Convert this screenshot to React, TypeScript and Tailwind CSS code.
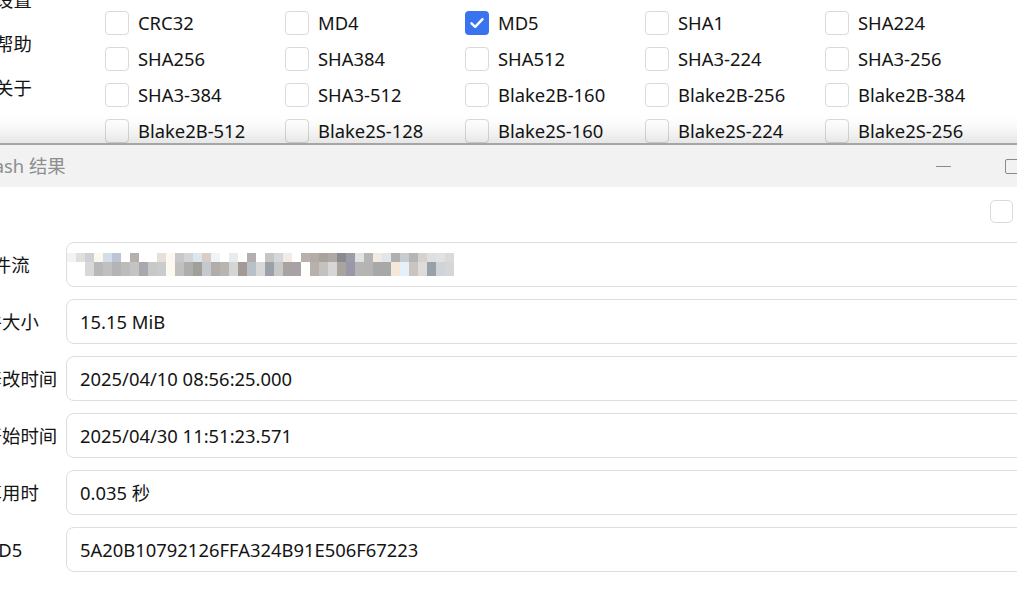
import React from "react";

const algos = [
  "CRC32", "MD4", "MD5", "SHA1", "SHA224",
  "SHA256", "SHA384", "SHA512", "SHA3-224", "SHA3-256",
  "SHA3-384", "SHA3-512", "Blake2B-160", "Blake2B-256", "Blake2B-384",
  "Blake2B-512", "Blake2S-128", "Blake2S-160", "Blake2S-224", "Blake2S-256",
];

const topRow = [
  "#f3f3f3", "#e2dedb", "#cfd0d3", "#fbf8f0", "#d2dfe9", "#bcc5d6", "#ffffff", "#b5b0ac", "#ffffff", "#ffffff",
  "#e8e0d8", "#fbf8f4", "#c8c8ca", "#d3d4d8", "#dde6ee", "#d8cec5", "#eef4f8", "#ffffff", "#e8ecee", "#ffffff",
  "#b5aeae", "#ffffff", "#c8c6c4", "#d5d8da", "#f2ece4", "#ffffff", "#b8b0ac", "#b2aba6", "#a8a39e", "#b0a8a4",
  "#8c8a8e", "#9a9ca8", "#e0e2e4", "#b5b5b5", "#f2ebe2", "#e2e6e8", "#b0b0b0", "#c6cccf", "#b5b5b5", "#d6d2cc",
  "#e0e0e0", "#e2e2e2", "#d8dadc",
];
const bottomRow = [
  "#ffffff", "#ffffff", "#d8d8d8", "#b8b8b8", "#c0c0c0", "#b4b4b4", "#bcbcbc", "#c4c4c4", "#a8a8b0", "#c8c8c8",
  "#c8cccc", "#fdf8f0", "#c0c0bc", "#b0aeac", "#a0a09b", "#c5c8cc", "#b0adaa", "#b8b4b0", "#d5d5d5", "#a09b95",
  "#b8c0c8", "#d8d8d8", "#9ca0a8", "#c8c8c8", "#a8a2a2", "#a8a2a4", "#ffffff", "#b8b0aa", "#c4c2bc", "#d6d6d6",
  "#aaa49e", "#9a98a8", "#b8b4b4", "#b4b4b4", "#a8a8a8", "#a8a8a8", "#f6e8d8", "#e6f0f8", "#c8c4c0", "#dcdcdc",
  "#98a0a8", "#d0d4d8", "#d4d6d8",
];

function Checkbox({ checked = false, size = 24 }: { checked?: boolean; size?: number }) {
  if (checked) {
    return (
      <div className="w-[24px] h-[24px] rounded-[4px] bg-[#3a73f0] flex items-center justify-center shrink-0">
        <svg width="16" height="16" viewBox="0 0 16 16" fill="none">
          <path d="M2.5 8.3 L6.2 11.8 L13.5 4.2" stroke="white" strokeWidth="2.4" strokeLinecap="round" strokeLinejoin="round" />
        </svg>
      </div>
    );
  }
  return (
    <div
      className={
        size === 24
          ? "w-[24px] h-[24px] rounded-[4px] border border-[#dadada] bg-white shrink-0"
          : "w-[23px] h-[23px] rounded-[5px] border border-[#dadada] bg-white shrink-0"
      }
    />
  );
}

function Mosaic() {
  return (
    <div className="flex flex-col -ml-[13px]">
      <div className="flex">
        {topRow.map((c, i) => (
          <div key={i} className="w-[9px] h-[9px]" style={{ backgroundColor: c }} />
        ))}
      </div>
      <div className="flex">
        {bottomRow.map((c, i) => (
          <div key={i} className="w-[9px] h-[14px]" style={{ backgroundColor: c }} />
        ))}
      </div>
    </div>
  );
}

const rows: { label: string; value: string | null }[] = [
  { label: "文件流", value: null },
  { label: "文件大小", value: "15.15 MiB" },
  { label: "文件修改时间", value: "2025/04/10 08:56:25.000" },
  { label: "计算开始时间", value: "2025/04/30 11:51:23.571" },
  { label: "计算用时", value: "0.035 秒" },
  { label: "MD5", value: "5A20B10792126FFA324B91E506F67223" },
];

export default function App() {
  return (
    <div className="relative w-[1017px] h-[611px] overflow-hidden bg-white text-[#141414] font-['Noto_Sans','Noto_Sans_CJK_SC',sans-serif] text-[18.4px]">
      {/* background app */}
      <div className="flex">
        <div className="w-[110px] -ml-[5px] -mt-[22px] flex flex-col">
          <div className="h-[44px] flex items-center">设置</div>
          <div className="h-[44px] flex items-center">帮助</div>
          <div className="h-[44px] flex items-center">关于</div>
        </div>
        <div className="pt-[5px] grid grid-cols-[repeat(5,180px)]">
          {algos.map((a) => (
            <div key={a} className="h-[36px] flex items-center gap-[9px]">
              <Checkbox checked={a === "MD5"} />
              <span className="leading-none">{a}</span>
            </div>
          ))}
        </div>
      </div>

      {/* result window */}
      <div className="absolute top-[143px] left-[-56px] w-[1140px] h-[480px] bg-white border-t-2 border-[#a6a6a6] shadow-[0_-6px_22px_rgba(0,0,0,0.14)]">
        <div className="h-[42px] bg-[#f2f2f2] flex items-center pl-[36px] text-[#8e8e8e]">
          <span>Hash 结果</span>
          <div className="ml-auto flex items-center gap-[54px] pr-[64px]">
            <div className="w-[15px] h-px bg-[#8a8a8a]" />
            <div className="w-[15px] h-[15px] border-[1.5px] border-[#8a8a8a] rounded-[2px]" />
          </div>
        </div>
        <div className="flex justify-end pr-[71px] mt-[13px]">
          <Checkbox size={23} />
        </div>
        <div className="mt-[19px] pr-[20px] flex flex-col gap-[12px]">
          {rows.map((r) => (
            <div key={r.label} className="flex items-center gap-[6px]">
              <div className="w-[116px] text-center whitespace-nowrap">{r.label}</div>
              <div className="flex-1 h-[45px] rounded-[8px] border border-[#dedede] px-[13px] flex items-center">
                {r.value === null ? <Mosaic /> : <span>{r.value}</span>}
              </div>
            </div>
          ))}
        </div>
      </div>
    </div>
  );
}
